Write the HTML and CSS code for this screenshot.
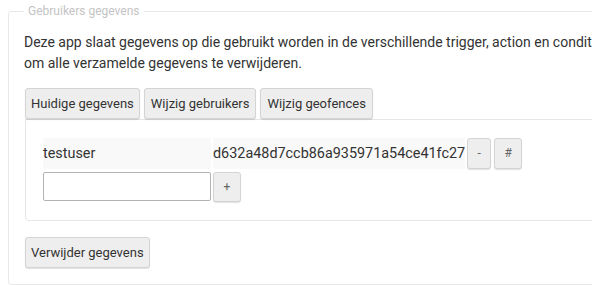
FILE: index.html
```html
<!DOCTYPE html>
<html lang="nl">
<head>
  <meta charset="UTF-8">
  <meta name="viewport" content="width=device-width, initial-scale=1.0">
  <title>Gebruikers gegevens</title>
  <link rel="stylesheet" href="styles.css">
</head>
<body>
  <fieldset class="gegevens">
    <legend>Gebruikers gegevens</legend>
    <p class="uitleg">Deze app slaat gegevens op die gebruikt worden in de verschillende trigger, action en condition kaarten. Gebruik de knop hieronder<br>om alle verzamelde gegevens te verwijderen.</p>

    <div class="tabs">
      <button class="knop">Huidige gegevens</button>
      <button class="knop">Wijzig gebruikers</button>
      <button class="knop">Wijzig geofences</button>
    </div>

    <div class="tab-panel">
      <div class="rij">
        <div class="cel naam">testuser</div>
        <div class="cel hash">d632a48d7ccb86a935971a54ce41fc27</div>
        <button class="knop klein smal">-</button>
        <button class="knop klein">#</button>
      </div>
      <div class="rij">
        <input type="text" class="veld">
        <button class="knop klein">+</button>
      </div>
    </div>

    <button class="knop verwijder">Verwijder gegevens</button>
  </fieldset>
</body>
</html>
```

FILE: styles.css
```css
html {
  overflow: hidden;
}
body {
  font-family: Roboto, "Liberation Sans", Arial, sans-serif;
  color: #333;
  background-color: #fff;
  margin: 3px 8px 8px;
}
.gegevens {
  width: 760px;
  margin: 0;
  padding: 0 16px 16px 15px;
  border: 1px solid #e8e8e8;
  border-radius: 3px;
}
.gegevens legend {
  font-size: 12px;
  line-height: 16px;
  color: #c4c4c4;
  padding: 0 4px;
}
.uitleg {
  font-size: 14px;
  line-height: 21px;
  margin: 13px 0 14px;
  white-space: nowrap;
}
.tabs {
  display: flex;
  gap: 4px;
  padding-left: 1px;
}
.knop {
  font-family: inherit;
  font-size: 13px;
  line-height: 17px;
  color: #333;
  background-color: #eeeeee;
  border: 1px solid #d4d4d4;
  border-radius: 3px;
  box-shadow: 0 1px 1px rgba(0, 0, 0, 0.12);
  padding: 6px 6px;
  cursor: pointer;
}
.tabs .knop {
  height: 31px;
}
.tabs .knop:first-child {
  padding: 6px 5px;
}
.tab-panel {
  margin-left: 1px;
  border: 1px solid #e6e6e6;
  border-radius: 0 0 0 4px;
  padding: 18px 17px 18px;
  display: flex;
  flex-direction: column;
  gap: 3px;
}
.rij {
  display: flex;
  align-items: stretch;
  gap: 2px;
}
.cel {
  background-color: #f9f9f9;
  font-size: 14.4px;
  line-height: 31px;
}
.naam {
  width: 168px;
}
.hash {
  padding: 0;
}
.klein {
  font-size: 12px;
  color: #666;
  width: 28px;
  padding: 0;
}
.smal {
  width: 24px;
}
.rij .knop + .knop {
  margin-left: 1px;
}
.veld {
  width: 168px;
  height: 29px;
  box-sizing: border-box;
  border: 1px solid #b3b3b3;
  border-radius: 2px;
  font-family: inherit;
  font-size: 14px;
  padding: 4px 6px;
}
.rij .veld + .knop {
  height: 30px;
}
.verwijder {
  margin: 16px 0 0 1px;
  height: 31px;
  padding: 6px 5px;
}
```
